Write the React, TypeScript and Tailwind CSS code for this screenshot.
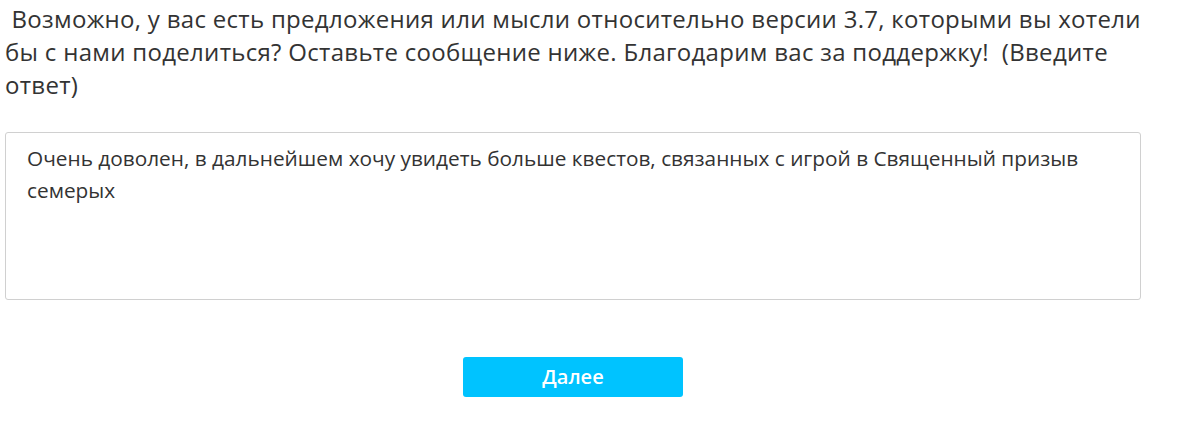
import { useState } from 'react'

export default function App() {
  const [answer, setAnswer] = useState(
    'Очень доволен, в дальнейшем хочу увидеть больше квестов, связанных с игрой в Священный призыв семерых'
  )

  return (
    <div className="w-[1188px] h-[424px] bg-white font-['Open_Sans','Noto_Sans',sans-serif]">
      <div className="w-[1136px] ml-[5px] pt-[2px]">
        {/* Question */}
        <h2 className="w-[1160px] text-[24px] tracking-[0.3px] leading-[33px] text-[#333333] font-normal whitespace-pre-wrap">
          {' Возможно, у вас есть предложения или мысли относительно версии 3.7, которыми вы хотели бы с нами поделиться? Оставьте сообщение ниже. Благодарим вас за поддержку!  (Введите ответ)'}
        </h2>

        {/* Answer */}
        <textarea
          value={answer}
          onChange={e => setAnswer(e.target.value)}
          className="block mt-[31px] w-full h-[168px] resize-none rounded-[3px] border border-[#d0d0d0] px-[21px] py-[9px] text-[20.8px] leading-[32px] text-[#333333] outline-none"
        />

        {/* Next button */}
        <div className="flex justify-center mt-[57px]">
          <button className="w-[220px] h-[40px] rounded-[3px] bg-[#00c3ff] text-white text-[20px] font-semibold">
            Далее
          </button>
        </div>
      </div>
    </div>
  )
}
